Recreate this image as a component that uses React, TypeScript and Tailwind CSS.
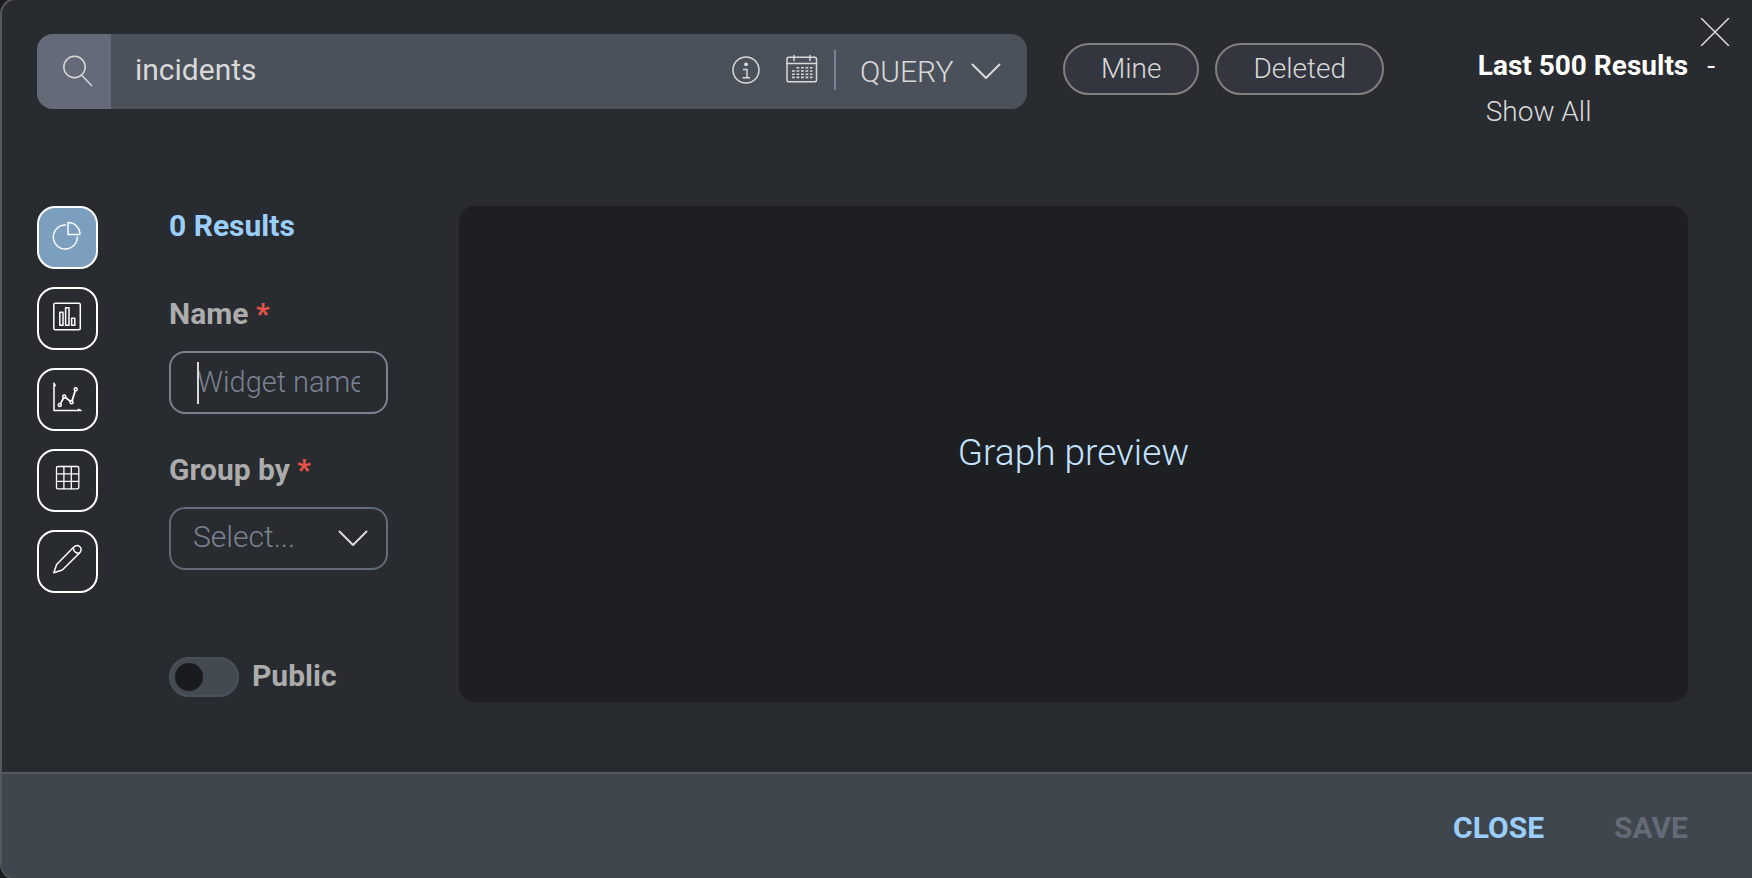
import { useState } from "react";
import type { ReactNode } from "react";

const stroke = {
  fill: "none",
  stroke: "currentColor",
  strokeLinecap: "round" as const,
  strokeLinejoin: "round" as const,
};

function SearchIcon() {
  return (
    <svg className="h-8 w-8" viewBox="0 0 32 32" {...stroke} strokeWidth="1.5" aria-hidden="true">
      <circle cx="12.5" cy="12" r="10.7" />
      <path d="M19.5 20 L29.5 30.5" />
    </svg>
  );
}

function InfoIcon() {
  return (
    <svg className="h-7 w-7" viewBox="0 0 28 28" {...stroke} strokeWidth="1.5" aria-hidden="true">
      <circle cx="14" cy="14" r="13" />
      <circle cx="14" cy="8.3" r="1.9" fill="currentColor" stroke="none" />
      <path d="M11 13.5 H15 V21.5 M10.5 21.7 H18" strokeLinecap="butt" />
    </svg>
  );
}

function CalendarIcon() {
  return (
    <svg className="h-8 w-8" viewBox="0 0 32 32" {...stroke} strokeWidth="1.5" aria-hidden="true">
      <rect x="1" y="3.2" width="29.5" height="24.5" rx="1.8" />
      <path d="M1 9.5 H30.5 M8 1.5 V6.5 M24 1.5 V6.5" />
      <g strokeWidth="1.6" strokeDasharray="2.8 1.7" strokeLinecap="butt">
        <path d="M10.5 13.8 H26.5" />
        <path d="M6 17 H26.5" />
        <path d="M6 20.2 H26.5" />
        <path d="M6 23.4 H26.5" />
      </g>
    </svg>
  );
}

function ChevronIcon({ className }: { className: string }) {
  return (
    <svg className={className} viewBox="0 0 30 18" {...stroke} strokeWidth="2" aria-hidden="true">
      <path d="M1.5 1.5 L15 15 L28.5 1.5" />
    </svg>
  );
}

function PieIcon() {
  return (
    <svg className="h-8 w-8" viewBox="0 0 32 32" {...stroke} strokeWidth="1.4" aria-hidden="true">
      <path d="M13.5 5 A12 12 0 1 0 25.3 17" />
      <path d="M16 2.5 V14.5 H28 A12 12 0 0 0 16 2.5 Z" />
    </svg>
  );
}

function BarsIcon() {
  return (
    <svg className="h-8 w-8" viewBox="0 0 32 32" {...stroke} strokeWidth="1.5" aria-hidden="true">
      <rect x="1.8" y="2.2" width="26.5" height="26.5" rx="1.5" />
      <rect x="7.8" y="11.2" width="3.2" height="13" />
      <rect x="13.6" y="6.7" width="3.4" height="17.5" />
      <rect x="19.6" y="17.2" width="3.2" height="7" />
    </svg>
  );
}

function LineIcon() {
  return (
    <svg className="h-8 w-8" viewBox="0 0 32 32" {...stroke} strokeWidth="1.5" aria-hidden="true">
      <path d="M3.2 3.5 L2 1.2 V28.5 H29 L26.5 27.4 M2 1.2 L2.8 3.7" />
      <circle cx="7.8" cy="23" r="1.5" />
      <circle cx="12.2" cy="14.5" r="1.5" />
      <circle cx="19.6" cy="20.2" r="1.5" />
      <circle cx="23.7" cy="7.2" r="1.5" />
      <path d="M8.6 21.4 L11.5 16.1 M13.5 15.5 L18.3 19.2 M20.1 18.5 L23.2 8.9" strokeWidth="1.8" />
    </svg>
  );
}

function GridIcon() {
  return (
    <svg className="h-8 w-8" viewBox="0 0 32 32" {...stroke} strokeWidth="1.3" aria-hidden="true">
      <rect x="4.5" y="3.5" width="22.3" height="22.3" rx="1.2" />
      <path d="M11.9 3.5 V25.8 M19.3 3.5 V25.8 M4.5 10.9 H26.8 M4.5 18.3 H26.8" />
    </svg>
  );
}

function PencilIcon() {
  return (
    <svg className="h-8 w-8" viewBox="0 0 32 32" {...stroke} strokeWidth="1.5" aria-hidden="true">
      <path d="M1.8 28.8 L4.6 20.6 L21.3 3.5 C23.8 1 26.3 1.2 27.9 2.7 C29.5 4.3 29.7 6.9 27.3 9.3 L10.3 26 Z" />
      <path d="M21.3 3.5 C21.3 7.1 23.7 9.3 27.3 9.3" />
    </svg>
  );
}

const charts: { name: string; icon: ReactNode }[] = [
  { name: "Pie chart", icon: <PieIcon /> },
  { name: "Bar chart", icon: <BarsIcon /> },
  { name: "Line chart", icon: <LineIcon /> },
  { name: "Table", icon: <GridIcon /> },
  { name: "Custom text", icon: <PencilIcon /> },
];

function Required() {
  return <span className="text-[#e9524a]">*</span>;
}

export default function App() {
  const [active, setActive] = useState("Pie chart");
  const [name, setName] = useState("");
  const [query, setQuery] = useState("incidents");

  return (
    <div className="flex min-h-screen flex-col overflow-hidden bg-[#1a1b1f] font-['Roboto',sans-serif] text-[28px] leading-8 font-light text-[#d9d9d9]">
      <div className="relative -my-0.5 flex flex-1 flex-col overflow-hidden rounded-l-2xl border-y-2 border-l-2 border-[#55585c] bg-[#282b2f]">
        <button type="button" aria-label="Close dialog" className="absolute top-4 right-5 p-0.5">
          <svg className="h-7 w-8" viewBox="0 0 32 28" {...stroke} strokeWidth="1.5" aria-hidden="true">
            <path d="M3.5 0.5 L30.5 27.5 M30.5 0.5 L3.5 27.5" />
          </svg>
        </button>

        <header className="flex items-start pt-[34px] pr-[37px] pl-[35px]">
          <form
            role="search"
            onSubmit={(e) => e.preventDefault()}
            className="flex h-[75px] min-w-0 max-w-[990px] flex-1 items-center overflow-hidden rounded-2xl bg-[#4b515b]"
          >
            <button
              type="submit"
              aria-label="Search"
              className="flex w-[74px] shrink-0 items-center justify-center self-stretch bg-[#646a78] pb-0.5 pl-2"
            >
              <SearchIcon />
            </button>
            <div className="flex min-w-0 flex-1 items-center pb-1">
              <input
                aria-label="Search text"
                value={query}
                onChange={(e) => setQuery(e.target.value)}
                className="min-w-0 flex-1 bg-transparent pl-6 text-[30px] font-normal outline-none"
              />
              <button type="button" aria-label="Search help" className="mr-[26px]">
                <InfoIcon />
              </button>
              <button type="button" aria-label="Date range" className="mr-4">
                <CalendarIcon />
              </button>
              <span className="h-10 w-0.5 bg-[#7a8292]" />
            </div>
            <div className="relative ml-6 flex items-center">
              <select
                aria-label="Saved query"
                className="w-[167px] appearance-none bg-transparent text-[30px] leading-9 outline-none"
              >
                <option>QUERY</option>
              </select>
              <ChevronIcon className="pointer-events-none absolute right-[26px] h-[18px] w-[30px]" />
            </div>
          </form>

          <div className="ml-9 flex shrink-0 gap-4 pt-[9px]">
            <button type="button" className="h-[52px] rounded-full border-2 border-[#808080] bg-[#34363f] px-9">
              Mine
            </button>
            <button type="button" className="h-[52px] rounded-full border-2 border-[#808080] bg-[#34363f] px-9">
              Deleted
            </button>
          </div>

          <div className="ml-auto shrink-0 pt-2">
            <p className="flex pt-px leading-[46px]">
              <strong className="font-bold text-white">Last 500 Results</strong>
              <span className="pl-[19px] font-normal text-white">-</span>
            </p>
            <a href="#all" className="block pl-2 leading-[46px]">
              Show All
            </a>
          </div>
        </header>

        <main className="flex flex-1 pt-[71px] pr-16 pb-[70px] pl-[35px]">
          <nav aria-label="Widget type" className="flex flex-col gap-[18px]">
            {charts.map((chart) => (
              <button
                key={chart.name}
                type="button"
                aria-label={chart.name}
                aria-pressed={active === chart.name}
                onClick={() => setActive(chart.name)}
                className={
                  active === chart.name
                    ? "flex h-[63px] w-[61px] items-center justify-center rounded-[18px] border-2 border-white bg-[#7c9fc0] pb-1 text-white"
                    : "flex h-[63px] w-[61px] items-center justify-center rounded-[18px] border-2 border-white pb-1 text-white"
                }
              >
                {chart.icon}
              </button>
            ))}
          </nav>

          <section className="ml-[71px] flex w-[219px] shrink-0 flex-col text-[30px]">
            <h2 className="mt-1 leading-8 font-bold text-[#9bcffb]">0 Results</h2>
            <label htmlFor="widget-name" className="mt-14 leading-8 font-bold text-[#acacac]">
              Name <Required />
            </label>
            <div className="relative mt-[21px]">
              <input
                id="widget-name"
                placeholder="Widget name"
                value={name}
                onChange={(e) => setName(e.target.value)}
                className="h-[63px] w-full rounded-2xl border-2 border-[#7a8292] bg-transparent px-[26px] pb-0.5 text-[29px] font-light outline-none placeholder:text-[#7a8292]"
              />
              {name === "" && (
                <span className="pointer-events-none absolute top-[11px] left-7 h-[42px] w-0.5 bg-[#d9d9d9]" />
              )}
            </div>
            <label htmlFor="group-by" className="mt-10 leading-8 font-bold text-[#acacac]">
              Group by <Required />
            </label>
            <div className="relative mt-[21px]">
              <select
                id="group-by"
                className="h-[63px] w-full appearance-none rounded-2xl border-2 border-[#626b79] bg-transparent px-[22px] pb-1 font-light text-[#7a8292] outline-none"
              >
                <option>Select...</option>
              </select>
              <ChevronIcon className="pointer-events-none absolute top-[23px] right-5 h-[18px] w-[30px]" />
            </div>
            <label className="mt-[87px] flex items-center gap-[13px] font-bold text-[#acacac]">
              <input
                type="checkbox"
                role="switch"
                className="h-10 w-[70px] appearance-none rounded-full border-2 border-[#4b515b] bg-[#434a51] p-1 before:block before:h-7 before:w-7 before:rounded-full before:bg-[#1a1b1e] checked:before:ml-8"
              />
              <span className="pb-0.5">Public</span>
            </label>
          </section>

          <section className="ml-[71px] flex flex-1 items-center justify-center rounded-2xl bg-[#1e1f23] pb-0.5 text-[37px] text-[#c3e3ff]">
            Graph preview
          </section>
        </main>

        <footer className="flex h-[106px] items-center justify-end gap-[70px] border-t-2 border-[#55585c] bg-[#40464d] pt-1 pr-16 text-[30px]">
          <button type="button" className="font-bold text-[#9bcffb]">
            CLOSE
          </button>
          <button type="button" disabled className="font-bold text-[#646a78]">
            SAVE
          </button>
        </footer>
      </div>
    </div>
  );
}
